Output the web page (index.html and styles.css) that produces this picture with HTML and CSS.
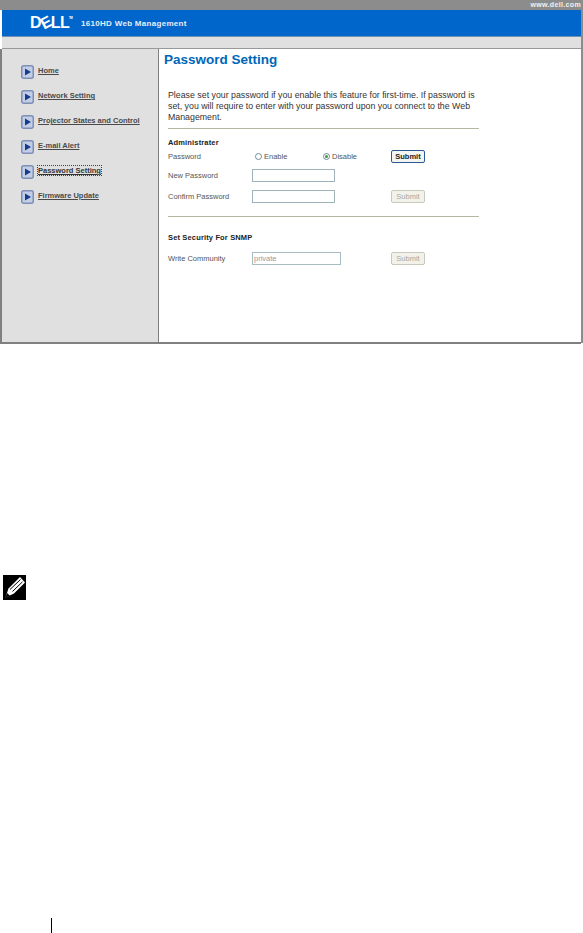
FILE: index.html
```html
<!DOCTYPE html>
<html lang="en">
<head>
    <meta charset="UTF-8">
    <meta name="viewport" content="width=device-width, initial-scale=1.0">
    <title>Password Setting - Web Management</title>
    <link rel="stylesheet" href="styles.css">
</head>
<body>
    <div class="frame">
        <div class="top-strip">www.dell.com</div>
        <div class="brand-bar">
            <div class="logo">D<span class="logo-e">E</span>LL<sup class="logo-tm">TM</sup></div>
            <div class="brand-title">1610HD Web Management</div>
        </div>
        <div class="sub-bar"></div>
        <div class="main">
            <div class="sidebar">
                <div class="nav-item">
                    <svg class="nav-icon" viewBox="0 0 13 14"><rect x="0.75" y="0.75" width="11.5" height="12.5" rx="2" fill="#c3cde6" stroke="#7d8fb5" stroke-width="1.5"/><path d="M4 3.5 L10 7 L4 10.5 Z" fill="#123c8c"/></svg>
                    <a href="#">Home</a>
                </div>
                <div class="nav-item">
                    <svg class="nav-icon" viewBox="0 0 13 14"><rect x="0.75" y="0.75" width="11.5" height="12.5" rx="2" fill="#c3cde6" stroke="#7d8fb5" stroke-width="1.5"/><path d="M4 3.5 L10 7 L4 10.5 Z" fill="#123c8c"/></svg>
                    <a href="#">Network Setting</a>
                </div>
                <div class="nav-item">
                    <svg class="nav-icon" viewBox="0 0 13 14"><rect x="0.75" y="0.75" width="11.5" height="12.5" rx="2" fill="#c3cde6" stroke="#7d8fb5" stroke-width="1.5"/><path d="M4 3.5 L10 7 L4 10.5 Z" fill="#123c8c"/></svg>
                    <a href="#">Projector States and Control</a>
                </div>
                <div class="nav-item">
                    <svg class="nav-icon" viewBox="0 0 13 14"><rect x="0.75" y="0.75" width="11.5" height="12.5" rx="2" fill="#c3cde6" stroke="#7d8fb5" stroke-width="1.5"/><path d="M4 3.5 L10 7 L4 10.5 Z" fill="#123c8c"/></svg>
                    <a href="#">E-mail Alert</a>
                </div>
                <div class="nav-item">
                    <svg class="nav-icon" viewBox="0 0 13 14"><rect x="0.75" y="0.75" width="11.5" height="12.5" rx="2" fill="#c3cde6" stroke="#7d8fb5" stroke-width="1.5"/><path d="M4 3.5 L10 7 L4 10.5 Z" fill="#123c8c"/></svg>
                    <a href="#" class="focused">Password Setting</a>
                </div>
                <div class="nav-item">
                    <svg class="nav-icon" viewBox="0 0 13 14"><rect x="0.75" y="0.75" width="11.5" height="12.5" rx="2" fill="#c3cde6" stroke="#7d8fb5" stroke-width="1.5"/><path d="M4 3.5 L10 7 L4 10.5 Z" fill="#123c8c"/></svg>
                    <a href="#">Firmware Update</a>
                </div>
            </div>
            <div class="content">
                <h1>Password Setting</h1>
                <div class="panel">
                    <p class="intro">Please set your password if you enable this feature for first-time. If password is set, you will require to enter with your password upon you connect to the Web Management.</p>
                    <div class="section first">
                        <h3>Administrater</h3>
                        <div class="form-row row-password">
                            <label>Password</label>
                            <div class="radios">
                                <span class="radio-item enable"><span class="radio"></span>Enable</span>
                                <span class="radio-item"><span class="radio checked"></span>Disable</span>
                            </div>
                            <button class="btn btn-active">Submit</button>
                        </div>
                        <div class="form-row row-new">
                            <label>New Password</label>
                            <input class="field" type="password">
                        </div>
                        <div class="form-row row-confirm">
                            <label>Confirm Password</label>
                            <input class="field" type="password">
                            <button class="btn" disabled>Submit</button>
                        </div>
                    </div>
                    <div class="section">
                        <h3 class="snmp-title">Set Security For SNMP</h3>
                        <div class="form-row row-snmp">
                            <label>Write Community</label>
                            <input class="field field-wide" type="text" value="private" disabled>
                            <button class="btn" disabled>Submit</button>
                        </div>
                    </div>
                </div>
            </div>
        </div>
    </div>

    <div class="note-mark">
        <svg viewBox="0 0 23 25" width="23" height="25">
            <rect width="23" height="25" fill="#000"/>
            <path d="M2.5 22.5 L5.5 13.5 L17 2 L22 7.5 L11 18.5 Z" fill="#fff"/>
            <path d="M7 14.5 L17.5 4.5 M9.5 16.5 L19.5 6.8" stroke="#000" stroke-width="1" fill="none"/>
            <path d="M2.5 22.5 L4 18 L7 20.8 Z" fill="#000"/>
        </svg>
    </div>
    <div class="page-rule"></div>
</body>
</html>
```

FILE: styles.css
```css
body {
    margin: 0;
    padding: 0;
    background-color: #ffffff;
    font-family: "Liberation Sans", Arial, sans-serif;
    color: #333333;
    height: 933px;
    overflow: hidden;
}
.frame {
    height: 343px;
    border-right: 2px solid #8c8c8c;
    box-sizing: border-box;
}
.top-strip {
    height: 10px;
    line-height: 9px;
    background-color: #8c8c8c;
    color: #f2f2f2;
    font-size: 7px;
    font-weight: bold;
    letter-spacing: 0.35px;
    text-align: right;
}
.brand-bar {
    height: 27px;
    margin-left: 2px;
    display: flex;
    align-items: center;
    background-color: #0066cc;
    border-bottom: 1px solid #6f8fb5;
    box-sizing: border-box;
    color: #ffffff;
}
.logo {
    width: 50px;
    margin-left: 28px;
    font-size: 16px;
    line-height: 14px;
    font-weight: bold;
    letter-spacing: -0.7px;
    white-space: nowrap;
}
.logo-e {
    display: inline-block;
    transform: rotate(-28deg);
}
.logo-tm {
    font-size: 3px;
    vertical-align: 9px;
    line-height: 0;
}
.brand-title {
    margin-left: 1px;
    font-size: 8px;
    font-weight: bold;
    letter-spacing: 0.3px;
    color: #e6eef8;
}
.sub-bar {
    height: 11px;
    margin-left: 2px;
    background-color: #e0e0e0;
    border-bottom: 1px solid #999999;
}
.main {
    display: flex;
    height: 295px;
    border-left: 2px solid #808080;
    border-bottom: 2px solid #808080;
    box-sizing: border-box;
}
.sidebar {
    width: 156px;
    padding-top: 16px;
    background-color: #e0e0e0;
    border-right: 1px solid #808080;
    box-sizing: content-box;
    flex-shrink: 0;
}
.nav-item {
    display: flex;
    align-items: flex-start;
    height: 25px;
    padding-left: 19px;
    font-size: 7.5px;
    font-weight: bold;
}
.nav-icon {
    width: 13px;
    height: 14px;
    margin-right: 4px;
    flex-shrink: 0;
}
.nav-item a {
    color: #4a4a4a;
    line-height: 9px;
    margin-top: 1px;
}
.nav-item a.focused {
    color: #333333;
    outline: 1px dotted #444444;
}
.content {
    flex: 1;
    padding-left: 5px;
}
h1 {
    margin: 3px 0 0 0;
    font-size: 13.5px;
    line-height: 16px;
    color: #0066b8;
}
.panel {
    width: 311px;
    margin-left: 4px;
    padding-top: 22px;
}
.intro {
    margin: 0;
    font-size: 8.8px;
    line-height: 11px;
    color: #333333;
}
.section {
    border-top: 1px solid #b6b6a4;
    height: 87px;
    font-size: 7.5px;
}
.section.first {
    margin-top: 5px;
}
h3 {
    margin: 0;
    padding-top: 9px;
    font-size: 7.5px;
    line-height: 9px;
    letter-spacing: 0.15px;
    color: #222222;
}
h3.snmp-title {
    padding-top: 16px;
}
.form-row {
    display: grid;
    grid-template-columns: 84px 139px 34px;
    align-items: center;
    color: #555555;
}
.row-password {
    margin-top: 2px;
    height: 15px;
}
.row-new {
    height: 14px;
    margin-top: 4px;
}
.row-confirm {
    height: 14px;
    margin-top: 7px;
}
.row-snmp {
    height: 14px;
    margin-top: 9px;
}
.radios {
    display: flex;
    padding-left: 3px;
}
.radio-item {
    display: flex;
    align-items: center;
}
.radio-item.enable {
    width: 68px;
}
.radio {
    width: 7px;
    height: 7px;
    margin-right: 2px;
    border: 1px solid #6d8a9c;
    border-radius: 50%;
    background-color: #ffffff;
    box-sizing: border-box;
    display: flex;
    align-items: center;
    justify-content: center;
}
.radio.checked::after {
    content: "";
    width: 3px;
    height: 3px;
    border-radius: 50%;
    background-color: #3f9a3f;
}
.field {
    width: 83px;
    height: 13px;
    margin: 0;
    padding: 0 1px;
    border: 1px solid #a0b2ba;
    border-radius: 0;
    background-color: #ffffff;
    box-sizing: border-box;
    outline: none;
    font-family: inherit;
    font-size: 7.5px;
    color: #9a9a9a;
}
.field-wide {
    width: 89px;
    border-color: #a8bcc4;
}
.btn {
    grid-column: 3;
    width: 34px;
    height: 13px;
    margin: 0;
    padding: 0;
    border: 1px solid #c9c9bc;
    border-radius: 2px;
    background-color: #f2f2ea;
    font-family: inherit;
    font-size: 7.5px;
    color: #a8a8a0;
}
.btn-active {
    border-color: #2a5a96;
    background-color: #f4f4f0;
    color: #222222;
    font-weight: bold;
}
.note-mark {
    margin: 232px 0 0 3px;
    height: 25px;
    line-height: 0;
}
.page-rule {
    width: 1px;
    height: 15px;
    margin: 318px 0 0 51px;
    background-color: #000000;
}
```
